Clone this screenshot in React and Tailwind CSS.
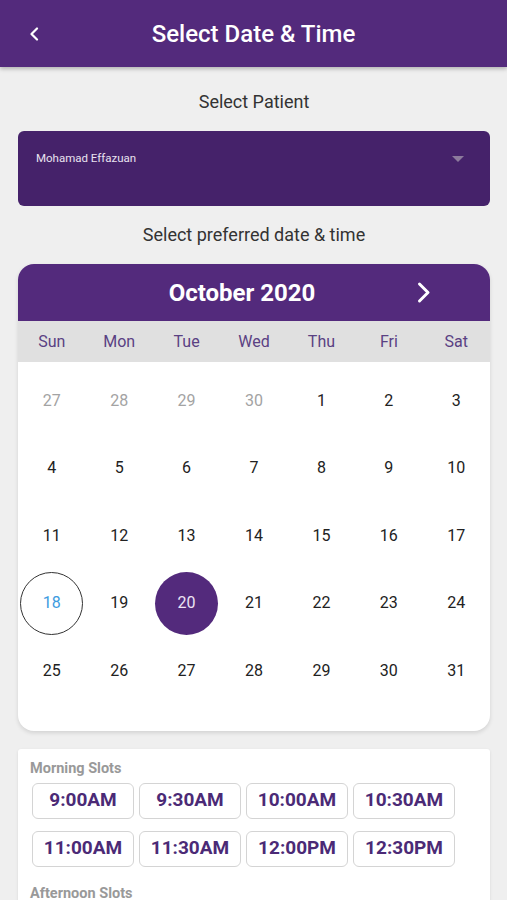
import React from "react";

const weeks = [
  [["27", "o"], ["28", "o"], ["29", "o"], ["30", "o"], ["1"], ["2"], ["3"]],
  [["4"], ["5"], ["6"], ["7"], ["8"], ["9"], ["10"]],
  [["11"], ["12"], ["13"], ["14"], ["15"], ["16"], ["17"]],
  [["18", "today"], ["19"], ["20", "sel"], ["21"], ["22"], ["23"], ["24"]],
  [["25"], ["26"], ["27"], ["28"], ["29"], ["30"], ["31"]],
];

const days = ["Sun", "Mon", "Tue", "Wed", "Thu", "Fri", "Sat"];

const morning = [
  ["9:00AM", "9:30AM", "10:00AM", "10:30AM"],
  ["11:00AM", "11:30AM", "12:00PM", "12:30PM"],
];

function Cell({ d, kind }) {
  let inner;
  if (kind === "sel") {
    inner = (
      <div className="w-[63px] h-[63px] rounded-full bg-[#532a7c] flex items-center justify-center text-[#ece4f4]">
        {d}
      </div>
    );
  } else if (kind === "today") {
    inner = (
      <div className="w-[63px] h-[63px] rounded-full border border-[#333] flex items-center justify-center text-[#3d9be0]">
        {d}
      </div>
    );
  } else {
    inner = <span className={kind === "o" ? "text-[#a3a3a3]" : "text-[#222]"}>{d}</span>;
  }
  return <div className="flex items-center justify-center h-[67.5px]">{inner}</div>;
}

export default function App() {
  return (
    <div className="w-[507px] h-[900px] overflow-hidden bg-[#efefef] font-['Roboto',sans-serif]">
      <div className="relative h-[67px] bg-[#532a7c] flex items-center justify-center shadow-[0_2px_4px_rgba(0,0,0,0.25)] z-10">
        <svg className="absolute left-[28px] top-[27px]" width="12" height="14" viewBox="0 0 12 14">
          <path d="M9 1.5 L3.5 7 L9 12.5" fill="none" stroke="white" strokeWidth="2.2" strokeLinecap="round" strokeLinejoin="round" />
        </svg>
        <h1 className="text-white text-[24px] font-medium">Select Date &amp; Time</h1>
      </div>

      <div className="pl-[18px] pr-[17px]">
        <div className="text-center text-[#333] text-[18px] pt-[21px] h-[64px]">Select Patient</div>
        <div className="h-[75px] rounded-[6px] bg-[#45226a] flex items-start justify-between pl-[18px] pr-[26px] pt-[19px]">
          <span className="text-[#e9e2f0] text-[11.5px]">Mohamad Effazuan</span>
          <svg className="mt-[6px]" width="12" height="6" viewBox="0 0 12 6">
            <path d="M0 0 L12 0 L6 6 Z" fill="#8c7a9c" />
          </svg>
        </div>
        <div className="text-center text-[#333] text-[18px] pt-[15px] h-[58px]">Select preferred date &amp; time</div>

        <div className="rounded-[16px] bg-white overflow-hidden shadow-[0_2px_4px_rgba(0,0,0,0.12)]">
          <div className="relative h-[57px] bg-[#532a7c] flex items-center justify-center">
            <span className="text-white text-[24px] font-bold mr-[24px]">October 2020</span>
            <svg className="absolute left-[398px] top-[17px]" width="16" height="24" viewBox="0 0 16 24">
              <path d="M3.5 3 L12 11.5 L3.5 20" fill="none" stroke="white" strokeWidth="3" strokeLinecap="round" strokeLinejoin="round" />
            </svg>
          </div>
          <div className="grid grid-cols-7 h-[41px] bg-[#e0e0e0] items-center">
            {days.map((d) => (
              <div key={d} className="text-center text-[#5a4183] text-[16px]">{d}</div>
            ))}
          </div>
          <div className="pt-[5px] pb-[26px] text-[16px]">
            {weeks.map((w, i) => (
              <div key={i} className="grid grid-cols-7">
                {w.map(([d, k], j) => (
                  <Cell key={j} d={d} kind={k} />
                ))}
              </div>
            ))}
          </div>
        </div>

        <div className="mt-[18px] bg-white rounded-[3px] shadow-[0_1px_3px_rgba(0,0,0,0.1)] pt-[12px] px-[12px] h-[200px]">
          <div className="text-[#999] text-[14.5px] font-bold leading-[16px]">Morning Slots</div>
          <div className="pl-[2px] pt-[6px] flex flex-col gap-[12px]">
            {morning.map((row, i) => (
              <div key={i} className="flex gap-[5px]">
                {row.map((t) => (
                  <div key={t} className="w-[102px] h-[36px] rounded-[6px] border border-[#d4d4d4] flex items-center justify-center text-[#4b2a76] text-[19px] font-bold">
                    {t}
                  </div>
                ))}
              </div>
            ))}
          </div>
          <div className="text-[#999] text-[14.5px] font-bold leading-[16px] mt-[19px]">Afternoon Slots</div>
        </div>
      </div>
    </div>
  );
}
